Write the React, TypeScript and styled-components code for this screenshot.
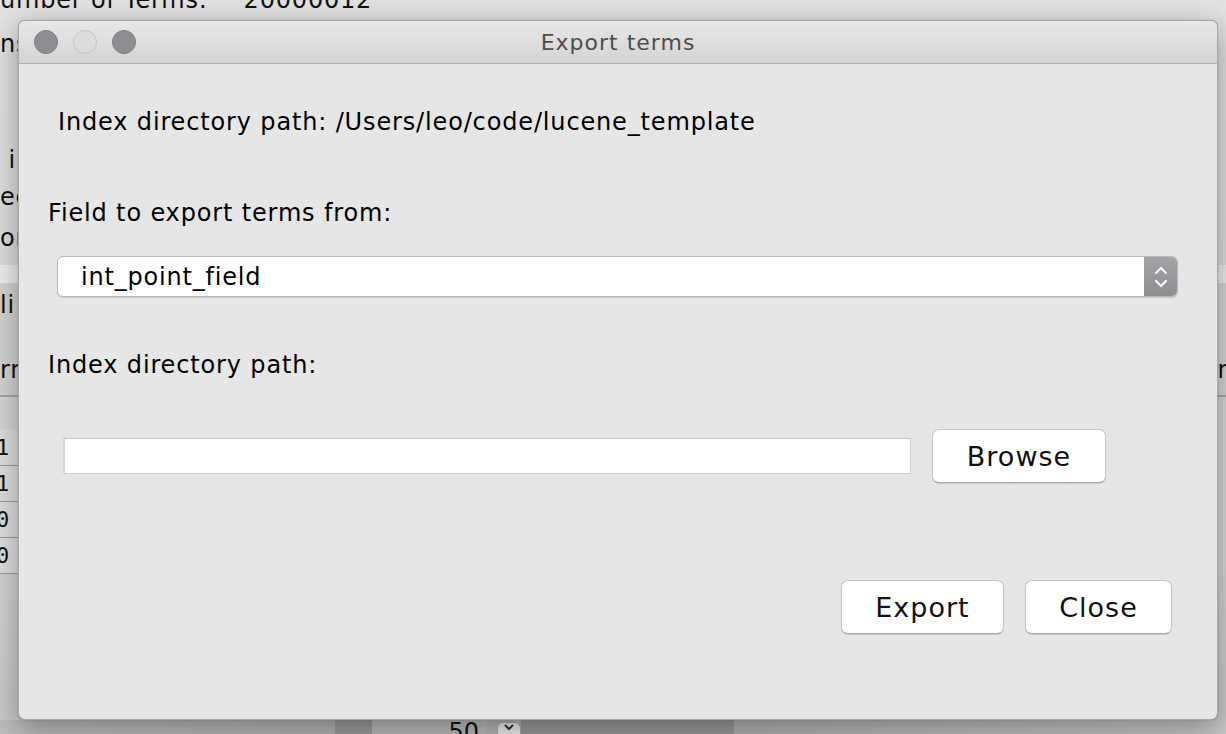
import React from "react";
import styled, { createGlobalStyle } from "styled-components";

const Global = createGlobalStyle`
  html, body { margin: 0; padding: 0; }
  body {
    width: 1226px;
    height: 734px;
    overflow: hidden;
    background: #dcdcdc;
    font-family: "DejaVu Sans", "Liberation Sans", sans-serif;
    color: #000;
  }
`;

const Desktop = styled.div`
  position: relative;
  width: 1226px;
  height: 734px;
  overflow: hidden;
  display: flex;
  flex-direction: column;
  background: #d6d6d6;
`;

/* ---------- the main window behind the dialog ---------- */
const BackTop = styled.div`
  height: 265px;
  display: flex;
  flex-direction: column;
  background: linear-gradient(180deg, #e2e2e2 0%, #dcdcdc 100%);
`;

const BackHeader = styled.div`
  height: 20px;
  display: flex;
  align-items: flex-end;
  gap: 36px;
  font-size: 24px;
  line-height: 28px;
  letter-spacing: 0.8px;
  overflow: hidden;
  color: #111;
  white-space: nowrap;
`;

const BackHeaderText = styled.span`
  display: block;
  transform: translateY(-6px);
`;

const BackLine = styled.div<{ $top: number }>`
  margin-top: ${(p) => p.$top}px;
  font-size: 24px;
  line-height: 28px;
  height: 28px;
  letter-spacing: 0.8px;
  white-space: nowrap;
  color: #111;
`;

const BackBand = styled.div`
  height: 18px;
  background: #ededed;
`;

const BackTabs = styled.div`
  height: 112px;
  display: flex;
  flex-direction: column;
  background: #d4d4d4;
  border-bottom: 2px solid #a7a7a7;
`;

const BackRows = styled.div`
  display: flex;
  flex-direction: column;
  padding-top: 33px;
`;

const BackRow = styled.div`
  height: 36px;
  border-bottom: 1px solid #9c9c9c;
  font-family: "DejaVu Sans Mono", monospace;
  font-size: 22px;
  line-height: 36px;
  color: #111;
  background: #dedede;
  width: 40px;
  box-sizing: border-box;
  text-indent: -4px;
`;

const BackRest = styled.div`
  flex: 1;
  background: linear-gradient(180deg, #d4d4d4 0%, #c8c8c8 100%);
`;

const BackBottom = styled.div`
  height: 14px;
  display: flex;
  background: #b3b3b3;
  overflow: hidden;
`;

const BottomSeg = styled.div<{ $w: number; $bg: string }>`
  width: ${(p) => p.$w}px;
  flex-shrink: 0;
  background: ${(p) => p.$bg};
  font-size: 24px;
  line-height: 14px;
  overflow: hidden;
  color: #111;
  display: flex;
  justify-content: flex-end;
  align-items: flex-start;
`;

const BottomNum = styled.span`
  display: block;
  margin-top: -2px;
  padding-right: 8px;
  line-height: 28px;
`;

const BottomChevron = styled.div`
  width: 22px;
  flex-shrink: 0;
  margin-top: 2px;
  background: #e9e9e9;
  border: 1px solid #a8a8a8;
  border-bottom: none;
  border-radius: 6px 6px 0 0;
  display: flex;
  justify-content: center;
`;

const RightEdgeText = styled.div`
  position: absolute;
  left: 1208px;
  top: 356px;
  font-size: 24px;
  line-height: 28px;
  color: #111;
`;

/* ---------- the dialog ---------- */
const Dialog = styled.div`
  position: absolute;
  left: 18px;
  top: 20px;
  width: 1200px;
  height: 700px;
  box-sizing: border-box;
  border-radius: 7px;
  background: #e6e6e6;
  border: 1px solid #a9a9a9;
  box-shadow: 0 8px 30px rgba(0, 0, 0, 0.35), 0 0 1px rgba(0, 0, 0, 0.4);
  display: flex;
  flex-direction: column;
  overflow: hidden;
`;

const TitleBar = styled.div`
  position: relative;
  height: 42px;
  flex-shrink: 0;
  display: flex;
  align-items: center;
  justify-content: center;
  background: linear-gradient(180deg, #e8e8e8 0%, #d4d4d4 100%);
  border-bottom: 1px solid #b1b1b1;
`;

const Lights = styled.div`
  position: absolute;
  left: 15px;
  top: 9px;
  display: flex;
  gap: 15px;
`;

const Light = styled.span<{ $off?: boolean }>`
  width: 24px;
  height: 24px;
  box-sizing: border-box;
  border-radius: 50%;
  background: ${(p) => (p.$off ? "#dcdcdc" : "#8e8d92")};
  border: 1px solid ${(p) => (p.$off ? "#c4c4c4" : "#7f7e83")};
`;

const Title = styled.div`
  font-size: 22px;
  color: #4d4d4d;
  letter-spacing: 1px;
`;

const Body = styled.div`
  flex: 1;
  display: flex;
  flex-direction: column;
  padding: 0 38px 0 29px;
`;

const Label = styled.div<{ $top: number; $indent?: number }>`
  margin-top: ${(p) => p.$top}px;
  margin-left: ${(p) => p.$indent ?? 0}px;
  font-size: 24px;
  letter-spacing: 0.85px;
  line-height: 28px;
  height: 28px;
  white-space: nowrap;
`;

const Select = styled.div`
  margin: 29px 1px 0 9px;
  height: 41px;
  box-sizing: border-box;
  display: flex;
  border: 1px solid #b9b9b9;
  border-radius: 6px;
  background: #fff;
  overflow: hidden;
  box-shadow: 0 1px 1px rgba(0, 0, 0, 0.12);
`;

const SelectValue = styled.div`
  flex: 1;
  padding: 2px 0 0 23px;
  font-size: 24px;
  letter-spacing: 0.8px;
  line-height: 37px;
`;

const Stepper = styled.div`
  width: 33px;
  display: flex;
  align-items: center;
  justify-content: center;
  background: linear-gradient(180deg, #a4a3a8 0%, #8f8e93 100%);
`;

const BrowseRow = styled.div`
  margin-top: 50px;
  display: flex;
  align-items: center;
  gap: 21px;
  padding-left: 15px;
`;

const TextInput = styled.div`
  width: 848px;
  height: 36px;
  box-sizing: border-box;
  background: #fff;
  border: 1px solid #cfcfcf;
  border-top-color: #c6c6c6;
  border-left: 2px solid #d8d8d8;
`;

const Button = styled.button<{ $w: number }>`
  width: ${(p) => p.$w}px;
  height: 54px;
  box-sizing: border-box;
  background: #fff;
  border: 1px solid #c6c6c6;
  border-bottom-color: #a9a9a9;
  border-radius: 7px;
  box-shadow: 0 1px 1px rgba(0, 0, 0, 0.12);
  font-family: "DejaVu Sans", "Liberation Sans", sans-serif;
  font-size: 27px;
  letter-spacing: 1px;
  color: #111;
  padding: 0;
  display: flex;
  align-items: center;
  justify-content: center;
`;

const Footer = styled.div`
  margin-top: 97px;
  display: flex;
  justify-content: flex-end;
  gap: 21px;
  padding-right: 7px;
`;

export default function App() {
  return (
    <>
      <Global />
      <Desktop>
        <BackTop>
          <BackHeader>
            <BackHeaderText>umber of Terms:</BackHeaderText>
            <BackHeaderText>20000012</BackHeaderText>
          </BackHeader>
          <BackLine $top={10}>ns</BackLine>
          <BackLine $top={88}>&nbsp;i in</BackLine>
          <BackLine $top={9}>ec</BackLine>
          <BackLine $top={13}>or</BackLine>
        </BackTop>
        <BackBand />
        <BackTabs>
          <BackLine $top={8}>li</BackLine>
          <BackLine $top={37}>rn</BackLine>
        </BackTabs>
        <BackRows>
          <BackRow>1</BackRow>
          <BackRow>1</BackRow>
          <BackRow>0</BackRow>
          <BackRow>0</BackRow>
        </BackRows>
        <BackRest />
        <BackBottom>
          <BottomSeg $w={335} $bg="linear-gradient(90deg,#bdbdbd,#b2b2b2)" />
          <BottomSeg $w={37} $bg="#9b9b9b" />
          <BottomSeg $w={115} $bg="#b9b9b9">
            <BottomNum>50</BottomNum>
          </BottomSeg>
          <BottomSeg $w={10} $bg="#b4b4b4" />
          <BottomChevron>
            <svg width="12" height="8" viewBox="0 0 12 8">
              <path d="M2 2 L6 6 L10 2" stroke="#333" strokeWidth="2" fill="none" />
            </svg>
          </BottomChevron>
          <BottomSeg $w={213} $bg="#989898" />
          <BottomSeg $w={500} $bg="linear-gradient(90deg,#b0b0b0,#c8c8c8)" />
        </BackBottom>
        <RightEdgeText>rn</RightEdgeText>

        <Dialog>
          <TitleBar>
            <Lights>
              <Light />
              <Light $off />
              <Light />
            </Lights>
            <Title>Export terms</Title>
          </TitleBar>
          <Body>
            <Label $top={44} $indent={10}>
              Index directory path: /Users/leo/code/lucene_template
            </Label>
            <Label $top={63}>Field to export terms from:</Label>
            <Select>
              <SelectValue>int_point_field</SelectValue>
              <Stepper>
                <svg width="16" height="26" viewBox="0 0 16 26">
                  <path d="M3 9 L8 4 L13 9" stroke="#fff" strokeWidth="2" fill="none" strokeLinecap="round" strokeLinejoin="round" />
                  <path d="M3 17 L8 22 L13 17" stroke="#fff" strokeWidth="2" fill="none" strokeLinecap="round" strokeLinejoin="round" />
                </svg>
              </Stepper>
            </Select>
            <Label $top={54}>Index directory path:</Label>
            <BrowseRow>
              <TextInput />
              <Button $w={174}>Browse</Button>
            </BrowseRow>
            <Footer>
              <Button $w={163}>Export</Button>
              <Button $w={147}>Close</Button>
            </Footer>
          </Body>
        </Dialog>
      </Desktop>
    </>
  );
}
